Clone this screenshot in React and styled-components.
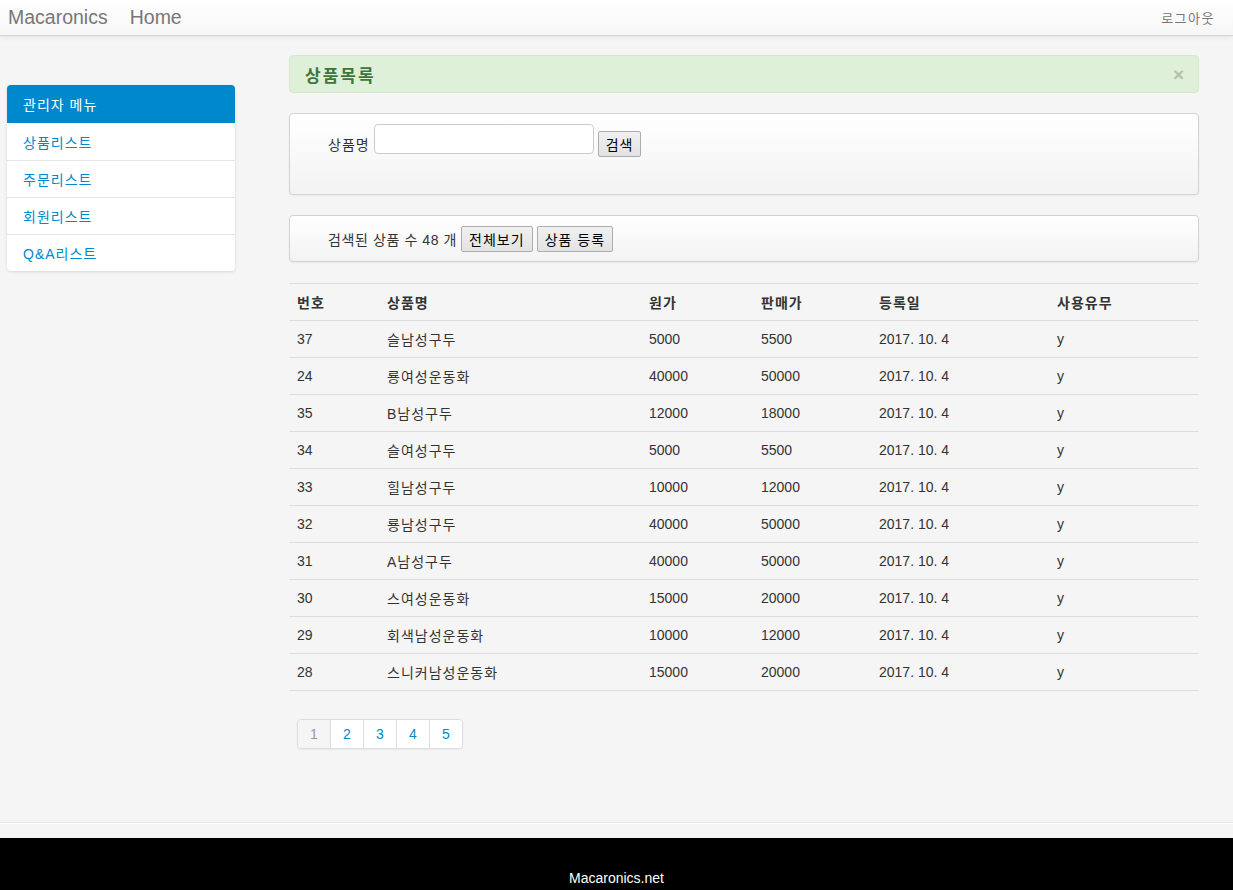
import React from "react";
import styled, { createGlobalStyle } from "styled-components";

const GlobalStyle = createGlobalStyle`
  * { box-sizing: border-box; }
  body {
    margin: 0;
    background: #f5f5f5;
    font-family: "Liberation Sans", "Noto Sans CJK KR", Arial, sans-serif;
    font-size: 14px;
    color: #333;
  }
`;

const Page = styled.div`
  min-height: 100vh;
  display: flex;
  flex-direction: column;
`;

const NavBar = styled.nav`
  height: 36px;
  display: flex;
  align-items: center;
  justify-content: space-between;
  padding: 0 18px 0 8px;
  background: linear-gradient(to bottom, #ffffff 0%, #f6f6f6 100%);
  border-bottom: 1px solid #d4d4d4;
  box-shadow: 0 1px 6px rgba(0, 0, 0, 0.08);
`;

const NavLeft = styled.div`
  display: flex;
  align-items: center;
  gap: 22px;
`;

const NavLink = styled.a`
  font-size: 19.5px;
  color: #777;
  text-decoration: none;
`;

const Logout = styled.a`
  font-size: 13px;
  letter-spacing: 1.5px;
  color: #777;
  text-decoration: none;
`;

const Body = styled.div`
  flex: 1;
  display: flex;
  align-items: flex-start;
  padding-left: 7px;
`;

const Sidebar = styled.aside`
  width: 228px;
  margin-top: 49px;
  background: #fff;
  border-radius: 4px;
  box-shadow: 0 1px 3px rgba(0, 0, 0, 0.12);
  overflow: hidden;
`;

const SideHead = styled.div`
  height: 38px;
  display: flex;
  align-items: center;
  padding-left: 16px;
  background: #0088cc;
  color: #fff;
  font-size: 14px;
  letter-spacing: 1px;
`;

const SideItem = styled.a`
  display: flex;
  align-items: center;
  height: 37px;
  padding-left: 16px;
  color: #0088cc;
  letter-spacing: 1px;
  text-decoration: none;
  border-top: ${(p) => (p.$first ? "none" : "1px solid #e5e5e5")};
`;

const Main = styled.main`
  width: 910px;
  margin-left: 54px;
  margin-top: 19px;
`;

const Alert = styled.div`
  height: 38px;
  display: flex;
  align-items: center;
  justify-content: space-between;
  padding: 0 14px 0 15px;
  background: #dff0d8;
  border: 1px solid #d6e9c6;
  border-radius: 4px;
  color: #3c763d;
`;

const AlertTitle = styled.h3`
  margin: 0;
  font-size: 17px;
  font-weight: bold;
  letter-spacing: 2px;
`;

const Close = styled.span`
  font-size: 19px;
  font-weight: bold;
  color: #000;
  opacity: 0.2;
  line-height: 1;
`;

const Well = styled.div`
  margin-top: 20px;
  height: ${(p) => p.$h}px;
  padding: ${(p) => p.$pad};
  display: flex;
  align-items: ${(p) => (p.$top ? "flex-start" : "center")};
  gap: 4px;
  background: linear-gradient(to bottom, #ffffff 0%, #f3f3f3 100%);
  border: 1px solid #d3d3d3;
  border-radius: 4px;
  box-shadow: 0 1px 2px rgba(0, 0, 0, 0.05);
`;

const Label = styled.span`
  color: #333;
  letter-spacing: ${(p) => p.$ls || 0.6}px;
  padding-top: ${(p) => p.$pt || 0}px;
`;

const Input = styled.input`
  width: 220px;
  height: 30px;
  border: 1px solid #ccc;
  border-radius: 4px;
  background: #fff;
`;

const Button = styled.button`
  height: 26px;
  padding: 0 7px;
  margin-top: ${(p) => p.$mt || 0}px;
  font-family: inherit;
  font-size: 14px;
  letter-spacing: 1px;
  color: #000;
  background: linear-gradient(to bottom, #f0f0f0 0%, #e3e3e3 100%);
  border: 1px solid #adadad;
  border-radius: 2px;
`;

const Table = styled.table`
  width: 100%;
  margin-top: 21px;
  border-collapse: collapse;
  table-layout: fixed;
`;

const Th = styled.th`
  text-align: left;
  font-weight: bold;
  letter-spacing: 1px;
  height: 37px;
  padding: 0 8px;
  border-top: 1px solid #ddd;
  border-bottom: 1px solid #ddd;
  width: ${(p) => p.$w}px;
`;

const Td = styled.td`
  height: 37px;
  padding: 0 8px;
  letter-spacing: ${(p) => (p.$ko ? "1px" : "0")};
  border-bottom: 1px solid #ddd;
`;

const Pager = styled.ul`
  display: flex;
  list-style: none;
  padding: 0;
  margin: 28px 0 0 8px;
  border: 1px solid #ddd;
  border-radius: 4px;
  width: max-content;
  overflow: hidden;
  box-shadow: 0 1px 2px rgba(0, 0, 0, 0.05);
`;

const PageItem = styled.li`
  width: ${(p) => (p.$first ? 32 : 33)}px;
  height: 28px;
  display: flex;
  align-items: center;
  justify-content: center;
  background: ${(p) => (p.$active ? "#f5f5f5" : "#fff")};
  color: ${(p) => (p.$active ? "#999" : "#0088cc")};
  border-left: ${(p) => (p.$first ? "none" : "1px solid #ddd")};
`;

const FooterLine = styled.div`
  height: 16px;
  margin-top: 58px;
  border-top: 1px solid #e6e6e6;
  box-shadow: inset 0 1px 0 #fff;
`;

const Footer = styled.footer`
  height: 52px;
  background: #000;
  color: #fff;
  text-align: center;
  padding-top: 32px;
  font-size: 14px;
`;

const cols = [
  ["번호", 90],
  ["상품명", 262],
  ["원가", 112],
  ["판매가", 118],
  ["등록일", 178],
  ["사용유무", 150],
];

const rows = [
  ["37", "슬남성구두", "5000", "5500"],
  ["24", "룡여성운동화", "40000", "50000"],
  ["35", "B남성구두", "12000", "18000"],
  ["34", "슬여성구두", "5000", "5500"],
  ["33", "힐남성구두", "10000", "12000"],
  ["32", "룡남성구두", "40000", "50000"],
  ["31", "A남성구두", "40000", "50000"],
  ["30", "스여성운동화", "15000", "20000"],
  ["29", "회색남성운동화", "10000", "12000"],
  ["28", "스니커남성운동화", "15000", "20000"],
];

export default function App() {
  return (
    <Page>
      <GlobalStyle />
      <NavBar>
        <NavLeft>
          <NavLink href="#">Macaronics</NavLink>
          <NavLink href="#">Home</NavLink>
        </NavLeft>
        <Logout href="#">로그아웃</Logout>
      </NavBar>
      <Body>
        <Sidebar>
          <SideHead>관리자 메뉴</SideHead>
          <SideItem href="#" $first>상품리스트</SideItem>
          <SideItem href="#">주문리스트</SideItem>
          <SideItem href="#">회원리스트</SideItem>
          <SideItem href="#">Q&amp;A리스트</SideItem>
        </Sidebar>
        <Main>
          <Alert>
            <AlertTitle>상품목록</AlertTitle>
            <Close>×</Close>
          </Alert>
          <Well $h={82} $pad="10px 38px" $top>
            <Label $pt={10} $ls={1}>상품명</Label>
            <Input />
            <Button $mt={7}>검색</Button>
          </Well>
          <Well $h={47} $pad="0 38px">
            <Label>검색된 상품 수 48 개</Label>
            <Button>전체보기</Button>
            <Button>상품 등록</Button>
          </Well>
          <Table>
            <thead>
              <tr>
                {cols.map(([c, w]) => (
                  <Th key={c} $w={w}>{c}</Th>
                ))}
              </tr>
            </thead>
            <tbody>
              {rows.map((r) => (
                <tr key={r[0]}>
                  <Td>{r[0]}</Td>
                  <Td $ko>{r[1]}</Td>
                  <Td>{r[2]}</Td>
                  <Td>{r[3]}</Td>
                  <Td>2017. 10. 4</Td>
                  <Td>y</Td>
                </tr>
              ))}
            </tbody>
          </Table>
          <Pager>
            {[1, 2, 3, 4, 5].map((n) => (
              <PageItem key={n} $active={n === 1} $first={n === 1}>{n}</PageItem>
            ))}
          </Pager>
        </Main>
      </Body>
      <FooterLine />
      <Footer>Macaronics.net</Footer>
    </Page>
  );
}
